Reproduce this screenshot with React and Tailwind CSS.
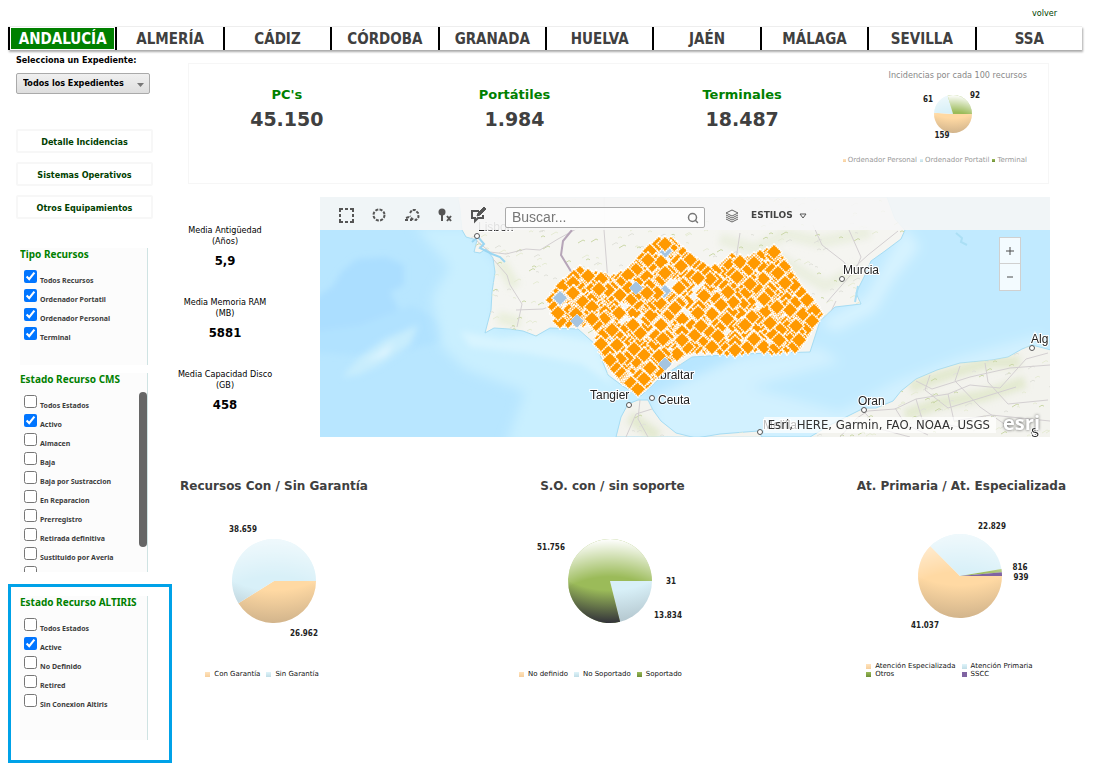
import React, { useState } from 'react';
import { Search } from 'lucide-react';
import clsx from 'clsx';

const provinces = ['ANDALUCÍA', 'ALMERÍA', 'CÁDIZ', 'CÓRDOBA', 'GRANADA', 'HUELVA', 'JAÉN', 'MÁLAGA', 'SEVILLA', 'SSA'];

const totals = [
    { label: "PC's", value: '45.150' },
    { label: 'Portátiles', value: '1.984' },
    { label: 'Terminales', value: '18.487' },
];

const averages = [
    { label: 'Media Antigüedad', unit: '(Años)', value: '5,9' },
    { label: 'Media Memoria RAM', unit: '(MB)', value: '5881' },
    { label: 'Media Capacidad Disco', unit: '(GB)', value: '458' },
];

const resourceTypes = [
    { label: 'Todos Recursos', checked: true },
    { label: 'Ordenador Portatil', checked: true },
    { label: 'Ordenador Personal', checked: true },
    { label: 'Terminal', checked: true },
];

const cmsStates = [
    { label: 'Todos Estados' },
    { label: 'Activo', checked: true },
    { label: 'Almacen' },
    { label: 'Baja' },
    { label: 'Baja por Sustraccion' },
    { label: 'En Reparacion' },
    { label: 'Prerregistro' },
    { label: 'Retirada definitiva' },
    { label: 'Sustituido por Averia' },
    { label: '' },
];

const altirisStates = [
    { label: 'Todos Estados' },
    { label: 'Active', checked: true },
    { label: 'No Definido' },
    { label: 'Retired' },
    { label: 'Sin Conexion Altiris' },
];

/* ---------- Filters ---------- */

function FilterPanel({ id, title, options, className, scroll }) {
    return (
        <fieldset className={clsx("relative min-w-0 overflow-hidden border-r border-[#cfe3e3] bg-[#fcfcfc] font-['Noto_Sans',sans-serif]", className)}>
            <legend className="float-left w-full text-[10px] leading-3 font-bold text-[#008000]">{title}</legend>
            <div className="clear-both pt-2.5 pl-1">
                {options.map((option, i) => (
                    <div key={option.label} className="flex h-[19px] items-start gap-[3px]">
                        <input
                            type="checkbox"
                            id={`${id}-${i}`}
                            defaultChecked={option.checked}
                            className="h-[13px] w-[13px] shrink-0 accent-[#0075ff]"
                        />
                        <label htmlFor={`${id}-${i}`} className="pt-1.5 text-[7px] leading-[10px] font-bold whitespace-nowrap text-[#3c3c3c]">
                            {option.label}
                        </label>
                    </div>
                ))}
            </div>
            {scroll && <div className="absolute top-[19px] right-0 h-[155px] w-2 rounded-full bg-[#666666]" />}
        </fieldset>
    );
}

/* ---------- Pie charts ---------- */

const sliceColors = {
    orange: { base: '#ffd9a3', light: 0.6, dark: 0.22 },
    blue: { base: '#d8f0f8', light: 0.6, dark: 0.22 },
    green: { base: '#9bbb59', light: 1, dark: 1 },
    purple: { base: '#8064a2', light: 0, dark: 0 },
};

function Pie({ id, cx, cy, r, slices }) {
    const total = slices.reduce((sum, s) => sum + s.value, 0);
    let angle = 0;
    return (
        <g>
            {slices.map((s) => {
                const start = angle;
                angle += (s.value / total) * Math.PI * 2;
                const large = angle - start > Math.PI ? 1 : 0;
                const d = `M${cx} ${cy}L${cx + r * Math.cos(start)} ${cy + r * Math.sin(start)}A${r} ${r} 0 ${large} 1 ${cx + r * Math.cos(angle)} ${cy + r * Math.sin(angle)}Z`;
                const color = sliceColors[s.color];
                const key = `${id}-${s.color}`;
                return (
                    <g key={key}>
                        <defs>
                            <radialGradient id={`${key}-l`} gradientUnits="userSpaceOnUse" cx={cx} cy={cy + 2 * r} r={3 * r}>
                                <stop offset="0.7" stopColor="#fff" stopOpacity="0" />
                                <stop offset="1" stopColor="#fff" stopOpacity={color.light} />
                            </radialGradient>
                            <radialGradient id={`${key}-d`} gradientUnits="userSpaceOnUse" cx={cx} cy={cy - 2 * r} r={3 * r}>
                                <stop offset="0.74" stopColor="#33333a" stopOpacity="0" />
                                <stop offset="1" stopColor="#33333a" stopOpacity={color.dark} />
                            </radialGradient>
                        </defs>
                        <path d={d} fill={color.base} />
                        <path d={d} fill={`url(#${key}-l)`} />
                        <path d={d} fill={`url(#${key}-d)`} />
                    </g>
                );
            })}
        </g>
    );
}

const swatches = {
    orange: 'bg-linear-to-b from-[#ffe3bd] to-[#f7cf9c]',
    blue: 'bg-linear-to-b from-[#dff4fa] to-[#c0dde6]',
    green: 'bg-linear-to-b from-[#9bbb59] to-[#6d8f35]',
    purple: 'bg-[#8064a2]',
};

function LegendItem({ color, small, children }) {
    return (
        <li className={clsx('flex items-center whitespace-nowrap', small ? 'gap-0.5' : 'gap-1')}>
            <span className={clsx(swatches[color], small ? 'h-[3px] w-[3px]' : 'h-[5px] w-[5px]')} />
            {children}
        </li>
    );
}

function ChartCard({ title, children, legend, legendClass }) {
    return (
        <section className="flex flex-col items-center font-['DejaVu_Sans',sans-serif]">
            <h2 className="text-[12px] leading-4 font-bold whitespace-nowrap text-[#404040]">{title}</h2>
            {children}
            <ul className={clsx('mr-6 text-[7px] leading-2 text-[#111]', legendClass)}>
                {legend.map(([color, label]) => (
                    <LegendItem key={label} color={color}>{label}</LegendItem>
                ))}
            </ul>
        </section>
    );
}

const chartText = "fill-[#222] font-['DejaVu_Sans_Condensed','DejaVu_Sans',sans-serif] text-[8px] font-bold";

/* ---------- Map ---------- */

// Small deterministic generator so that the markers stay put between renders
function createRandom(seed) {
    let s = seed;
    return () => {
        s = (s * 16807) % 2147483647;
        return s / 2147483647;
    };
}

function inside([x, y], polygon) {
    let hit = false;
    for (let i = 0, j = polygon.length - 1; i < polygon.length; j = i++) {
        const [xi, yi] = polygon[i];
        const [xj, yj] = polygon[j];
        if (yi > y !== yj > y && x < ((xj - xi) * (y - yi)) / (yj - yi) + xi) hit = !hit;
    }
    return hit;
}

const region = [
    [233, 103], [243, 89], [260, 76], [276, 81], [294, 84], [308, 78], [318, 68], [330, 54], [339, 47], [351, 47],
    [363, 57], [377, 68], [388, 76], [402, 72], [412, 63], [428, 66], [440, 60], [454, 55], [464, 70], [474, 88],
    [487, 103], [496, 117], [487, 131], [475, 149], [452, 151], [435, 148], [415, 153], [392, 150], [370, 150],
    [350, 160], [338, 173], [318, 192], [303, 180], [290, 163], [281, 147], [283, 135], [270, 122], [256, 123], [240, 124],
];

const random = createRandom(4213);
const markers = [];
// Outline first, then the interior
region.forEach(([x, y], i) => {
    const [nx, ny] = region[(i + 1) % region.length];
    const steps = Math.max(1, Math.round(Math.hypot(nx - x, ny - y) / 8));
    for (let k = 0; k < steps; k++) {
        markers.push([Math.round(x + ((nx - x) * k) / steps), Math.round(y + ((ny - y) * k) / steps)]);
    }
});
while (markers.length < 620) {
    const p = [Math.round(233 + random() * 264), Math.round(45 + random() * 150)];
    if (inside(p, region)) markers.push(p);
}
markers.sort(() => random() - 0.5);

const iberia = 'M138 0L140 12L142 33L146 40L157 43L154 55L160 56L166 52L173 61L175 75L172 95L171 113L165 136L174 131L190 132L203 134L216 139L230 131L258 132L276 148L288 178L304 190L321 199L340 181L372 160L420 157L490 155L500 124L515 110L541 107L536 96L545 78L551 64L565 54L581 42L585 33L575 22L567 0Z';
const africa = 'M296 240L301 220L308 207L318 203L328 203L333 213L341 224L356 236L376 241L400 237L438 234L442 240L490 240L510 228L530 218L544 211L556 211L573 204L581 194L596 182L617 173L640 166L672 163L688 160L702 152L712 148L731 153V241Z';

const specks = [];
while (specks.length < 900) {
    specks.push([Math.round(random() * 730), Math.round(random() * 240), 1 + Math.round(random() * 4), random()]);
}

const roads = [
    'M157 44L170 55L186 57L206 52L220 53L238 42L260 30', 'M173 62L187 78L190 88L202 107L197 130', 'M284 0V33L288 85',
    'M420 36L416 62', 'M493 28L502 48L524 65L532 78', 'M529 33L541 60L536 72L507 105', 'M578 34L548 58L526 78',
    'M306 240L316 217L332 212', 'M320 203L318 222L328 240', 'M520 240L537 221L548 214L575 212L596 202L628 197L650 188L680 191L706 162L728 156',
    'M545 216L560 232L590 240', 'M575 211L585 227L608 238', 'M596 202L602 222L648 232', 'M628 197L634 224L671 218L730 224',
    'M596 184L612 192L650 180L690 171L730 168', 'M665 166L668 185L688 207L728 203', 'M640 169L635 184L660 210L690 231', 'M610 178L605 193L628 211L696 190',
    'M505 127L516 104', 'M196 113L223 112L238 106',
];

const cities = [
    { name: 'Lisbon', x: 157, y: 39, tx: 158, ty: 34 },
    { name: 'Murcia', x: 522, y: 82, tx: 523, ty: 77 },
    { name: 'Tangier', x: 309, y: 208, tx: 270, ty: 202 },
    { name: 'Ceuta', x: 332, y: 201, tx: 338, ty: 207 },
    { name: 'Gibraltar', tx: 328, ty: 182 },
    { name: 'Oran', x: 544, y: 213, tx: 538, ty: 208 },
    { name: 'Alg', x: 712, y: 151, tx: 711, ty: 146 },
    { name: 'Melilla', x: 440, y: 235, tx: 443, ty: 232 },
    { name: 'S', x: 714, y: 236, tx: 711, ty: 240 },
];

function MapCanvas() {
    return (
        <svg viewBox="0 0 730 240" preserveAspectRatio="xMidYMid slice" className="absolute inset-0 h-full w-full">
            <defs>
                <clipPath id="land"><path d={`${iberia}${africa}`} /></clipPath>
                <filter id="soft" x="-20%" y="-20%" width="140%" height="140%"><feGaussianBlur stdDeviation="6" /></filter>
                <filter id="haze" x="-20%" y="-20%" width="140%" height="140%"><feGaussianBlur stdDeviation="3" /></filter>
            </defs>
            <rect width="730" height="240" fill="#b8e6ff" />
            {/* sea floor relief */}
            <g filter="url(#haze)">
                <path d="M22 74L37 62L66 60L84 68V88L70 95L80 115L68 130L48 126L31 142H-10V104L12 90Z" fill="#abdeff" />
                <path d="M-10 135L40 128L92 108L130 130L120 145L60 160L-10 155Z" fill="#b1e2ff" />
            </g>
            <g filter="url(#soft)">
                <path d="M740 -10H560L500 120L330 200L440 250H740Z" fill="#c1eaff" />
                <path d="M95 30H150L180 70L176 130L280 130L330 205L295 250H185L205 195L145 172L122 150L112 100L130 70Z" fill="#c9efff" />
                <path d="M330 200L420 160L500 150L520 165L430 190L520 215L575 185L640 160L720 138L730 160L600 200L500 245H335Z" fill="#d2f1ff" />
                <path d="M585 30L600 50L572 85L555 115L515 135L500 125L545 100Z" fill="#d6f3ff" />
            </g>
            <g filter="url(#haze)">
                <path d="M22 180L40 160L65 142L98 128L90 148L60 168L38 178Z" fill="#c8edfd" />
                <path d="M44 165L58 157L74 145L66 158Z" fill="#e3f7ff" />
                <path d="M140 134L180 142L230 137L275 145L292 188L262 167L205 156L150 150Z" fill="#d8f4ff" />
            </g>
            <path d={iberia} fill="#f5f5f1" stroke="#a6dcf3" />
            <path d={africa} fill="#f3f3ee" stroke="#a6dcf3" />
            <g clipPath="url(#land)" fill="none">
                <g filter="url(#haze)">
                    <path d="M400 42L435 52L466 37L500 45L550 35M456 60L505 89L540 72" stroke="#e5ebd5" strokeWidth="12" opacity=".6" />
                    <path d="M590 190L625 178L670 165L700 165M585 218L620 206L663 199L705 185M310 220L338 240" stroke="#dde5c4" strokeWidth="12" opacity=".7" />
                    <path d="M180 65L195 90M178 120L200 126" stroke="#e6ecd4" strokeWidth="12" opacity=".7" />
                </g>
                {specks.map(([x, y, w, tone], i) => (
                    <path
                        key={i}
                        d={`M${x} ${y}l${w} -${w * 0.6}l2 1`}
                        stroke={tone > 0.75 ? '#cbd8a9' : tone > 0.4 ? '#e0e1da' : '#e6ebd5'}
                    />
                ))}
                {roads.map((d) => <path key={d} d={d} stroke="#d3cfd1" />)}
                <path d="M252 33L243 44L241 58L252 76L259 70L269 76" stroke="#b6a5b8" strokeWidth="2" />
            </g>
            <path d="M152 45L158 40L164 47L160 51L172 57L180 60L185 65" fill="none" stroke="#9bd6f2" strokeWidth="2" />
            <path d="M636 36l6 5l-1 4l6 3M535 105l3 -16" fill="none" stroke="#abdff5" strokeWidth="2" />
            <g className="text-[12px]" style={{ fontFamily: '"Liberation Sans", Arial, sans-serif' }}>
                {cities.map((c) => (
                    <g key={c.name}>
                        {c.x && <circle cx={c.x} cy={c.y} r="2.5" fill="#fff" stroke="#555" />}
                        <text x={c.tx} y={c.ty} fill="#222" stroke="#fff" strokeWidth="2" paintOrder="stroke">{c.name}</text>
                    </g>
                ))}
            </g>
            {markers.map(([x, y], i) => (
                <path
                    key={i}
                    d={`M${x} ${y - 8}l8 8l-8 8l-8 -8Z`}
                    fill={i % 90 === 44 ? '#a5c4e0' : '#ff9900'}
                    stroke="#fff"
                    strokeWidth="1.6"
                    strokeDasharray="1.6 0.6"
                />
            ))}
            {[[257, 124], [345, 167], [316, 91]].map(([x, y]) => (
                <path key={x} d={`M${x} ${y - 7}l7 7l-7 7l-7 -7Z`} fill="#a5c4e0" stroke="#fff" strokeDasharray="1 1" />
            ))}
        </svg>
    );
}

const toolButtons = [
    {
        title: 'Seleccionar rectángulo',
        icon: <path d="M2 5V2H5M7 2H10M12 2H15V5M15 7V10M15 12V15H12M10 15H7M5 15H2V12M2 10V7" />,
    },
    {
        title: 'Seleccionar círculo',
        icon: <circle cx="8" cy="8" r="5.5" strokeDasharray="3 1.3" />,
    },
    {
        title: 'Seleccionar lazo',
        icon: (
            <>
                <path d="M6 6L8 3L11 3L14 6L14.500 10L12 13L8 12L6 9" strokeDasharray="3 1.3" />
                <path d="M5 10L2 11M1 13H4M6 13H8" />
            </>
        ),
    },
    {
        title: 'Borrar selección',
        icon: (
            <>
                <circle cx="5" cy="5" r="3.500" fill="#555" stroke="none" />
                <path d="M5 8V14" />
                <path d="M10 9L14 14M14 9L10 14" />
            </>
        ),
    },
    {
        title: 'Anotar',
        icon: (
            <>
                <path d="M9 4H2V11H5V14L8 11H13V8" />
                <path d="M7 9L8 6L14 0L16 2L10 8Z" fill="#555" strokeWidth="1" />
            </>
        ),
    },
];

function ResourceMap() {
    return (
        <div className="relative h-60 min-w-0 flex-1 overflow-hidden">
            <MapCanvas />
            <div className="relative flex h-[33px] items-center bg-[#f6f6f6]/90 pt-1 pl-[18px]">
                <div className="flex gap-4">
                    {toolButtons.map((tool) => (
                        <button key={tool.title} type="button" title={tool.title} className="h-[17px] w-[17px]">
                            <svg viewBox="0 0 17 17" fill="none" stroke="#555" strokeWidth="2" className="h-[17px] w-[17px]">{tool.icon}</svg>
                        </button>
                    ))}
                </div>
                <div className="relative mt-1 ml-[18px]">
                    <input
                        type="text"
                        aria-label="Buscar"
                        placeholder="Buscar..."
                        className="block h-[21px] w-[200px] rounded-xs border border-[#aaaaaa] bg-white/80 px-1.5 font-['Liberation_Sans',Arial,sans-serif] text-[14px] outline-none placeholder:text-[#777]"
                    />
                    <Search className="absolute top-[5px] right-[6px] h-3 w-3 text-[#777]" strokeWidth={3} />
                </div>
                <button type="button" className="ml-5 flex items-center gap-3 font-['DejaVu_Sans',sans-serif] text-[9px] font-bold text-[#444]">
                    <svg viewBox="0 0 14 14" fill="none" stroke="#666" className="h-3.5 w-3.5">
                        <path d="M7 1L13 4L7 7L1 4ZM1 6L7 9L13 6M1 8L7 11L13 8M1 10L7 13L13 10" />
                    </svg>
                    <span className="flex items-center gap-1.5">
                        ESTILOS
                        <svg viewBox="0 0 8 6" fill="none" stroke="#555" className="h-1.5 w-2"><path d="M1 1H7L4 5Z" /></svg>
                    </span>
                </button>
            </div>
            <div className="absolute top-10 right-[29px] flex w-[22px] flex-col border border-[#d0d0d0] bg-white/80 text-[#4c4c4c]">
                <button type="button" title="Acercar" className="flex h-[26px] items-center justify-center border-b border-[#d0d0d0]">
                    <svg viewBox="0 0 8 8" stroke="currentColor" className="h-2 w-2"><path d="M4 0V8M0 4H8" /></svg>
                </button>
                <button type="button" title="Alejar" className="flex h-[26px] items-center justify-center">
                    <svg viewBox="0 0 8 8" stroke="currentColor" className="h-2 w-2"><path d="M1 4H7" /></svg>
                </button>
            </div>
            <div className="absolute right-[54px] bottom-1 bg-white/70 pr-1.5 pl-1 text-[13px] leading-4 whitespace-nowrap text-[#323232]">
                Esri, HERE, Garmin, FAO, NOAA, USGS
            </div>
            <div className="absolute right-2.5 bottom-0.5 font-['Open_Sans',sans-serif] text-[20px] leading-6 font-bold text-white [text-shadow:0_0_3px_#555]">esri</div>
        </div>
    );
}

/* ---------- Page ---------- */

export default function App() {
    const [province, setProvince] = useState('ANDALUCÍA');

    return (
        <div className="bg-white pr-3 pl-2 font-['DejaVu_Sans_Condensed','DejaVu_Sans',sans-serif] text-black">
            <div className="flex h-[26px] items-center justify-end pt-0.5 pr-[25px] text-[9px]">
                <a href="#volver" className="text-[#004000]">volver</a>
            </div>

            <nav className="grid h-6 grid-cols-10 border-t border-[#eeeeee] shadow-[1px_2px_2px_#aaaaaa]">
                {provinces.map((name) => (
                    <button
                        key={name}
                        type="button"
                        onClick={() => setProvince(name)}
                        className="flex items-stretch border-l-2 border-black p-px text-[15px] leading-5 font-bold"
                    >
                        <span
                            className={clsx(
                                'flex flex-1 items-center justify-center',
                                province === name ? 'bg-[#008000] text-white' : 'text-[#404040]'
                            )}
                        >
                            {name}
                        </span>
                    </button>
                ))}
            </nav>

            <div className="flex items-start">
                <aside className="w-[164px] shrink-0">
                    <div className="pt-1 pl-2">
                        <label htmlFor="expediente" className="block text-[9px] leading-3 font-bold">Selecciona un Expediente:</label>
                        <div className="relative mt-[7px] w-[134px]">
                            <select
                                id="expediente"
                                className="block h-[21px] w-full appearance-none rounded-xs border border-[#aaaaaa] bg-linear-to-b from-[#f0f0f0] to-[#dedede] pl-1.5 text-[9px] font-bold"
                            >
                                <option>Todos los Expedientes</option>
                            </select>
                            <svg viewBox="0 0 7 4" className="pointer-events-none absolute top-[10px] right-[6px] h-1 w-[7px]"><path d="M0 0H7L3.500 4Z" fill="#777" /></svg>
                        </div>
                        <div className="mt-[35px] flex w-[137px] flex-col gap-[9px]">
                            {['Detalle Incidencias', 'Sistemas Operativos', 'Otros Equipamientos'].map((label) => (
                                <button key={label} type="button" className="h-6 rounded-xs border-2 border-[#f7f7f7] pt-0.5 text-[9px] leading-3 font-bold text-[#004000]">
                                    {label}
                                </button>
                            ))}
                        </div>
                    </div>

                    <div className="mt-[29px] ml-3 flex w-32 flex-col gap-2">
                        <FilterPanel id="tipo" title="Tipo Recursos" options={resourceTypes} className="h-[117px]" />
                        <FilterPanel id="cms" title="Estado Recurso CMS" options={cmsStates} className="h-[199px]" scroll />
                    </div>

                    <div className="mt-3 border-3 border-[#00a2e8] pt-[9px] pb-5 pl-[9px]">
                        <FilterPanel id="altiris" title="Estado Recurso ALTIRIS" options={altirisStates} className="h-[144px] w-32" />
                    </div>
                </aside>

                <main className="min-w-0 flex-1 pl-2">
                    <section className="mt-[13px] mr-[33px] ml-2 flex h-[121px] border border-[#f6f6f6]">
                        <div className="-mx-4 grid flex-1 grid-cols-3 pt-5">
                            {totals.map((t) => (
                                <div key={t.label} className="flex flex-col items-center font-['DejaVu_Sans',sans-serif]">
                                    <div className="text-[13px] leading-[22px] font-bold text-[#008000]">{t.label}</div>
                                    <div className="text-[19px] leading-[26px] font-bold text-[#404040]">{t.value}</div>
                                </div>
                            ))}
                        </div>
                        <div className="flex w-[208px] shrink-0 flex-col items-end pt-1 pr-[21px]">
                            <h2 className="text-[9px] leading-[14px] text-[#888]">Incidencias por cada 100 recursos</h2>
                            <svg viewBox="0 0 150 74" className="h-[74px] w-[150px]">
                                <Pie id="inc" cx={76} cy={32} r={19} slices={[{ value: 159, color: 'orange' }, { value: 61, color: 'blue' }, { value: 92, color: 'green' }]} />
                                <g className={chartText} textAnchor="middle">
                                    <text x="51" y="20">61</text>
                                    <text x="98" y="16">92</text>
                                    <text x="65" y="56">159</text>
                                </g>
                            </svg>
                            <ul className="flex gap-[3px] font-['DejaVu_Sans',sans-serif] text-[7px] leading-2 text-[#999]">
                                <LegendItem color="orange" small>Ordenador Personal</LegendItem>
                                <LegendItem color="blue" small>Ordenador Portatil</LegendItem>
                                <LegendItem color="green" small>Terminal</LegendItem>
                            </ul>
                        </div>
                    </section>

                    <section className="mt-[13px] mr-8 flex">
                        <div className="flex w-[140px] shrink-0 flex-col pt-7">
                            {averages.map((a) => (
                                <div key={a.label} className="h-[72px] w-[90px] text-center">
                                    <div className="flex flex-col items-center text-[9px] leading-[11px] whitespace-nowrap">
                                        <span>{a.label}</span>
                                        <span>{a.unit}</span>
                                    </div>
                                    <div className="mt-1.5 text-[13px] leading-4 font-bold">{a.value}</div>
                                </div>
                            ))}
                        </div>
                        <ResourceMap />
                    </section>

                    <div className="mt-[37px] mr-4 flex justify-between">
                        <ChartCard
                            title="Recursos Con / Sin Garantía"
                            legend={[['orange', 'Con Garantía'], ['blue', 'Sin Garantía']]}
                            legendClass="flex gap-1.5"
                        >
                            <svg viewBox="0 0 188 176" className="h-[176px] w-[188px]">
                                <Pie id="gar" cx={94} cy={87} r={42} slices={[{ value: 26962, color: 'orange' }, { value: 38659, color: 'blue' }]} />
                                <g className={chartText} textAnchor="middle">
                                    <text x="63" y="38">38.659</text>
                                    <text x="124" y="142">26.962</text>
                                </g>
                            </svg>
                        </ChartCard>
                        <ChartCard
                            title="S.O. con / sin soporte"
                            legend={[['orange', 'No definido'], ['blue', 'No Soportado'], ['green', 'Soportado']]}
                            legendClass="flex gap-1.5"
                        >
                            <svg viewBox="0 0 188 176" className="h-[176px] w-[188px]">
                                <Pie id="sop" cx={92} cy={87} r={42} slices={[{ value: 31, color: 'orange' }, { value: 13834, color: 'blue' }, { value: 51756, color: 'green' }]} />
                                <g className={chartText} textAnchor="middle">
                                    <text x="33" y="56">51.756</text>
                                    <text x="153" y="90">31</text>
                                    <text x="150" y="124">13.834</text>
                                </g>
                            </svg>
                        </ChartCard>
                        <ChartCard
                            title="At. Primaria / At. Especializada"
                            legend={[['orange', 'Atención Especializada'], ['blue', 'Atención Primaria'], ['green', 'Otros'], ['purple', 'SSCC']]}
                            legendClass="grid grid-cols-[auto_auto] gap-x-1.5"
                        >
                            <svg viewBox="0 0 188 168" className="h-[168px] w-[188px]">
                                <Pie id="ate" cx={93} cy={82} r={42} slices={[{ value: 41037, color: 'orange' }, { value: 22829, color: 'blue' }, { value: 816, color: 'green' }, { value: 939, color: 'purple' }]} />
                                <g className={chartText} textAnchor="middle">
                                    <text x="125" y="35">22.829</text>
                                    <text x="153" y="76">816</text>
                                    <text x="154" y="86">939</text>
                                    <text x="58" y="134">41.037</text>
                                </g>
                            </svg>
                        </ChartCard>
                    </div>
                </main>
            </div>
        </div>
    );
}
